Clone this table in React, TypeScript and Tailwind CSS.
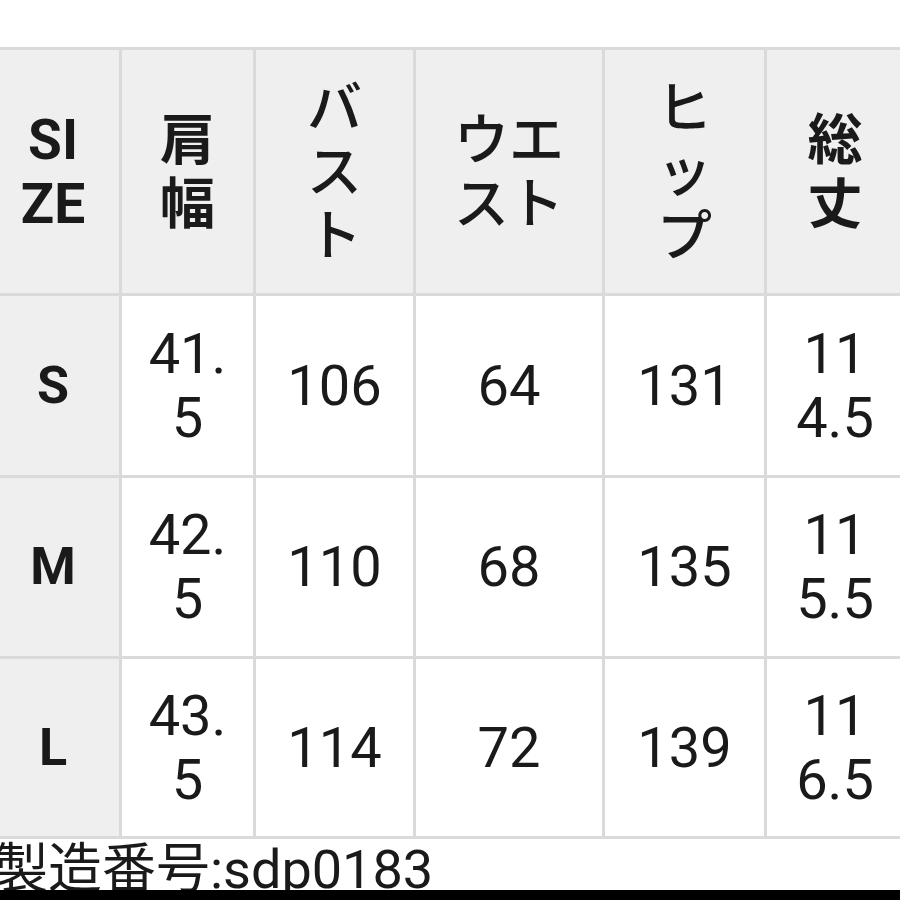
const header: { lines: string[]; w: string }[] = [
  { lines: ["SI", "ZE"], w: "font-bold" },
  { lines: ["肩", "幅"], w: "font-bold" },
  { lines: ["バ", "ス", "ト"], w: "font-medium" },
  { lines: ["ウエ", "スト"], w: "font-medium" },
  { lines: ["ヒ", "ッ", "プ"], w: "font-medium" },
  { lines: ["総", "丈"], w: "font-bold" },
];

const rows: { size: string; cells: string[][]; h: string }[] = [
  { size: "S", cells: [["41.", "5"], ["106"], ["64"], ["131"], ["11", "4.5"]], h: "h-[179px]" },
  { size: "M", cells: [["42.", "5"], ["110"], ["68"], ["135"], ["11", "5.5"]], h: "h-[178px]" },
  { size: "L", cells: [["43.", "5"], ["114"], ["72"], ["139"], ["11", "6.5"]], h: "h-[177px]" },
];

function Lines({ lines }: { lines: string[] }) {
  return (
    <div className="flex flex-col items-center">
      {lines.map((l, i) => (
        <span key={i} className="block">
          {l}
        </span>
      ))}
    </div>
  );
}

export default function App() {
  return (
    <div
      className="w-[900px] h-[900px] overflow-hidden bg-white text-[#1a1a1a] flex flex-col"
      style={{ fontFamily: 'Roboto, "Noto Sans CJK JP", sans-serif' }}
    >
      <div className="h-[47px] shrink-0" />

      {/* size table */}
      <div className="ml-[-16px] w-[928px] shrink-0 bg-[#dadada] p-[3px] grid grid-cols-[132px_131px_157px_186px_159px_136px] gap-[3px]">
        {header.map((h, i) => (
          <div
            key={i}
            className={`h-[243px] bg-[#efefef] flex items-center justify-center text-[55px] leading-[64px] ${h.w}`}
          >
            <Lines lines={h.lines} />
          </div>
        ))}

        {rows.map((r) => (
          <>
            <div
              key={r.size}
              className={`${r.h} bg-[#efefef] flex items-center justify-center text-[52px] font-bold`}
            >
              {r.size}
            </div>
            {r.cells.map((c, j) => (
              <div
                key={r.size + j}
                className={`${r.h} bg-white flex items-center justify-center text-[56px] leading-[64px]`}
              >
                <Lines lines={c} />
              </div>
            ))}
          </>
        ))}
      </div>

      {/* footer, cut off by the black bar as in the screenshot */}
      <div className="h-[51px] shrink-0 overflow-hidden ml-[-6px]">
        <div className="pt-[4px] text-[54px] leading-[54px] whitespace-nowrap">製造番号:sdp0183</div>
      </div>
      <div className="h-[10px] shrink-0 bg-black" />
    </div>
  );
}
